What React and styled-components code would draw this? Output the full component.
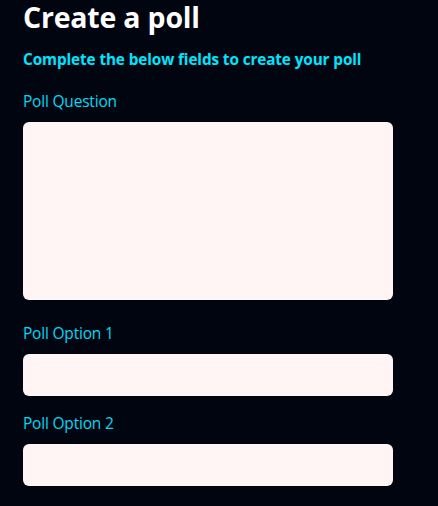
import React from 'react';
import styled, { createGlobalStyle } from 'styled-components';

const GlobalStyle = createGlobalStyle`
  html, body {
    margin: 0;
    padding: 0;
    background: #010510;
  }
  body {
    font-family: 'Open Sans', 'Noto Sans', sans-serif;
  }
`;

const Page = styled.div`
  min-height: 506px;
  padding: 0 45px 0 23px;
  background: #010510;
  box-sizing: border-box;
`;

const Title = styled.h1`
  margin: 0;
  font-size: 28.5px;
  line-height: 34px;
  font-weight: 700;
  color: #ffffff;
  letter-spacing: -0.2px;
`;

const Subtitle = styled.h2`
  margin: 15px 0 0;
  font-size: 15.3px;
  line-height: 20px;
  font-weight: 700;
  color: #00e5ff;
  letter-spacing: -0.1px;
`;

const Form = styled.form`
  display: flex;
  flex-direction: column;
  gap: 16px;
  margin-top: 21px;
`;

const Field = styled.label`
  display: flex;
  flex-direction: column;
  gap: 10px;
`;

const Label = styled.span`
  font-size: 15.5px;
  line-height: 22px;
  color: #00daf5;
  letter-spacing: -0.2px;
`;

const Input = styled.textarea`
  display: block;
  width: 370px;
  height: ${({ $tall }) => ($tall ? '178px' : '42px')};
  margin-bottom: ${({ $tall }) => ($tall ? '6px' : '0')};
  box-sizing: border-box;
  border: none;
  border-radius: 6px;
  background: #fff5f4;
  resize: none;
  outline: none;
  padding: 10px 12px;
  font: inherit;
`;

export default function App() {
  return (
    <Page>
      <GlobalStyle />
      <Title>Create a poll</Title>
      <Subtitle>Complete the below fields to create your poll</Subtitle>
      <Form>
        <Field>
          <Label>Poll Question</Label>
          <Input $tall />
        </Field>
        <Field>
          <Label>Poll Option 1</Label>
          <Input as="input" />
        </Field>
        <Field>
          <Label>Poll Option 2</Label>
          <Input as="input" />
        </Field>
      </Form>
    </Page>
  );
}
